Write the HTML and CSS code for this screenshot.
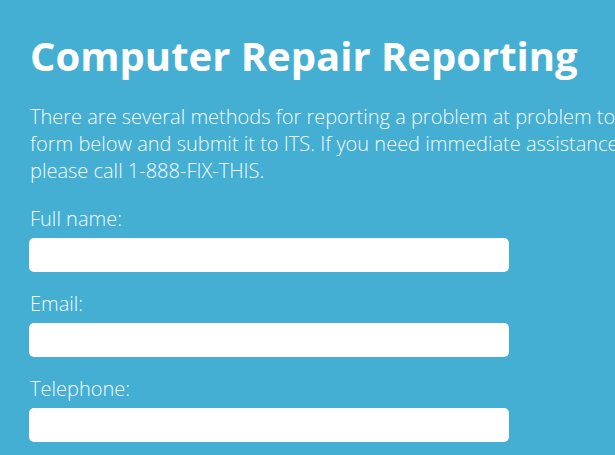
FILE: index.html
```html
<!DOCTYPE html>
<html lang="en">
<head>
<meta charset="utf-8">
<title>Computer Repair Reporting</title>
<link rel="stylesheet" href="styles.css">
</head>
<body>
<main class="page">
  <h1 class="title">Computer Repair Reporting</h1>
  <p class="intro">There are several methods for reporting a problem at problem tool. Fill out the<br>form below and submit it to ITS. If you need immediate assistance,<br>please call 1-888-FIX-THIS.</p>
  <form class="form">
    <label class="field">
      <span class="field-label">Full name:</span>
      <input class="field-input" type="text">
    </label>
    <label class="field">
      <span class="field-label">Email:</span>
      <input class="field-input" type="email">
    </label>
    <label class="field">
      <span class="field-label">Telephone:</span>
      <input class="field-input" type="tel">
    </label>
  </form>
</main>
</body>
</html>
```
FILE: styles.css
```css
html, body {
  margin: 0;
  padding: 0;
  background: #45afd3;
  overflow: hidden;
}
body {
  font-family: "Open Sans", "Liberation Sans", sans-serif;
  color: #ffffff;
  width: 615px;
  height: 455px;
}
.page {
  padding: 28px 0 0 29px;
  width: 800px;
}
.title {
  margin: 0;
  font-size: 40px;
  font-weight: 700;
  line-height: normal;
  color: #ffffff;
  padding-left: 1px;
}
.intro {
  margin: 20px 0 0 0;
  font-size: 20px;
  font-weight: 300;
  line-height: 27px;
  color: #f4fbfd;
  white-space: nowrap;
  padding-left: 1px;
}
.form {
  margin-top: 21px;
  display: flex;
  flex-direction: column;
  gap: 18px;
}
.field {
  display: flex;
  flex-direction: column;
  gap: 6px;
}
.field-label {
  font-size: 20px;
  font-weight: 300;
  line-height: 27px;
  color: #f4fbfd;
  padding-left: 1px;
}
.field-input {
  box-sizing: border-box;
  width: 480px;
  height: 34px;
  border: none;
  border-radius: 5px;
  background: #ffffff;
  margin: 0;
  padding: 0 10px;
  font-family: inherit;
  font-size: 16px;
  outline: none;
}
```
